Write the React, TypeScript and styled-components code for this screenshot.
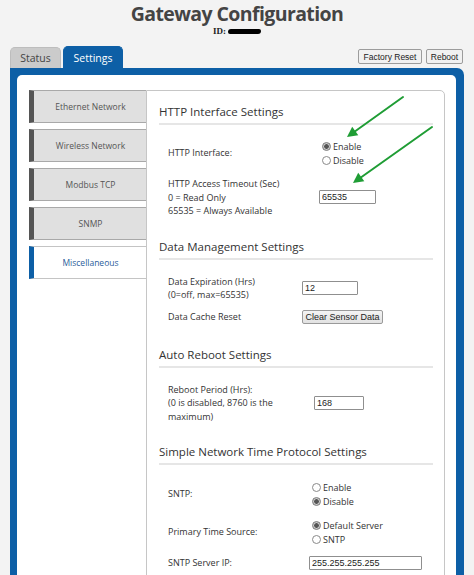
import React from "react";
import styled, { createGlobalStyle } from "styled-components";

const BLUE = "#0d5fa6";

const GlobalStyle = createGlobalStyle`
  html, body {
    margin: 0;
    padding: 0;
    overflow: hidden;
    background: #f3f3f3;
    font-family: "Open Sans", "Noto Sans", sans-serif;
  }
  * { box-sizing: border-box; }
`;

const Page = styled.div`
  position: relative;
  width: 474px;
  height: 575px;
  overflow: hidden;
`;

const Header = styled.header`
  height: 46px;
  display: flex;
  flex-direction: column;
  align-items: center;
`;

const Title = styled.h1`
  margin: 0;
  font-size: 19.5px;
  line-height: normal;
  letter-spacing: -0.6px;
  font-weight: 700;
  color: #444;
  text-align: center;
`;

const IdLine = styled.div`
  height: 9px;
  display: flex;
  justify-content: center;
  align-items: center;
  gap: 2px;
  font-family: "Liberation Serif", serif;
  font-weight: 700;
  font-size: 9px;
  line-height: 9px;
  color: #222;
`;

const Redacted = styled.span`
  display: inline-block;
  width: 33px;
  height: 5px;
  background: #000;
  border-radius: 3px 2px 3px 2px;
`;

const TabsRow = styled.div`
  height: 22px;
  padding: 0 11px 0 10px;
  display: flex;
  align-items: flex-end;
`;

const Tab = styled.div<{ $active?: boolean; $w: number }>`
  width: ${(p) => p.$w}px;
  height: ${(p) => (p.$active ? 22 : 21)}px;
  margin-right: 2px;
  border-radius: 5px 5px 0 0;
  display: flex;
  align-items: center;
  justify-content: center;
  font-size: 10.5px;
  background: ${(p) => (p.$active ? BLUE : "#cbcbcb")};
  color: ${(p) => (p.$active ? "#fff" : "#444")};
  border: 1px solid ${(p) => (p.$active ? BLUE : "#bdbdbd")};
  border-bottom: none;
`;

const TopButtons = styled.div`
  margin-left: auto;
  align-self: flex-start;
  margin-top: 3px;
  display: flex;
  gap: 4px;
`;

const SmallButton = styled.button<{ $w: number }>`
  width: ${(p) => p.$w}px;
  height: 15px;
  padding: 0;
  font-family: "Liberation Sans", Arial, sans-serif;
  font-size: 8.5px;
  color: #222;
  background: #f1f1f1;
  border: 1px solid #9c9c9c;
  border-radius: 2px;
`;

const Panel = styled.div`
  margin: 0 10px;
  background: ${BLUE};
  padding: 7px 8px 0 7px;
  border-radius: 0 7px 0 0;
`;

const Inner = styled.div`
  background: #fff;
  border-radius: 5px 5px 0 0;
  padding: 15px 11px 0 12px;
  height: 520px;
  display: flex;
`;

const Nav = styled.div`
  width: 117px;
  flex: none;
  display: flex;
  flex-direction: column;
  gap: 6px;
`;

const NavItem = styled.div<{ $active?: boolean }>`
  height: 33px;
  display: flex;
  align-items: center;
  justify-content: center;
  font-size: 8.5px;
  color: ${(p) => (p.$active ? "#2b5d9b" : "#555")};
  background: ${(p) => (p.$active ? "#fff" : "#e0e0e0")};
  border-top: 1px solid ${(p) => (p.$active ? "#c4c4c4" : "#a9a9a9")};
  border-bottom: 1px solid ${(p) => (p.$active ? "#c4c4c4" : "#a9a9a9")};
  border-left: 5px solid ${(p) => (p.$active ? BLUE : "#555")};
  padding-left: 1px;
`;

const Content = styled.div`
  flex: 1;
  border: 1px solid #c6c6c6;
  border-radius: 0 5px 0 0;
  padding: 0 11px 0 12px;
`;

const Section = styled.section<{ $top: number }>`
  margin-top: ${(p) => p.$top}px;
`;

const Heading = styled.h2`
  margin: 0;
  font-size: 11.5px;
  line-height: 16px;
  font-weight: 400;
  color: #333;
`;

const Rule = styled.div`
  margin-top: 3px;
  border-top: 2px solid #e6e6e6;
`;

const Rows = styled.div`
  padding-left: 9px;
`;

const Row = styled.div<{ $top: number }>`
  display: flex;
  align-items: center;
  margin-top: ${(p) => p.$top}px;
`;

const Label = styled.div<{ $w: number }>`
  width: ${(p) => p.$w}px;
  flex: none;
  font-size: 9px;
  line-height: 13.5px;
  color: #333;
  white-space: nowrap;
`;

const RadioGroup = styled.div`
  display: flex;
  flex-direction: column;
`;

const RadioOption = styled.label`
  height: 14px;
  display: flex;
  align-items: center;
  font-size: 9px;
  color: #333;
`;

const RadioDot = styled.span<{ $checked?: boolean }>`
  width: 9px;
  height: 9px;
  margin: 0 2px 0 3px;
  border-radius: 50%;
  border: 1px solid ${(p) => (p.$checked ? "#7a7a7a" : "#8a8a8a")};
  background: ${(p) =>
    p.$checked
      ? "radial-gradient(circle, #555 0 2px, #c9c9c9 2.6px)"
      : "#fff"};
`;

const TextInput = styled.input<{ $w: number }>`
  width: ${(p) => p.$w}px;
  height: 14px;
  padding: 0 2px;
  font-family: "Liberation Sans", Arial, sans-serif;
  font-size: 9px;
  color: #222;
  border: 1px solid #8f8f8f;
  border-radius: 1px;
  background: #fff;
  outline: none;
`;

const ActionButton = styled.button`
  width: 81px;
  height: 14px;
  padding: 0;
  font-family: "Liberation Sans", Arial, sans-serif;
  font-size: 9px;
  color: #222;
  background: linear-gradient(#f4f4f4, #e2e2e2);
  border: 1px solid #9a9a9a;
  border-radius: 2px;
`;

const Overlay = styled.svg`
  position: absolute;
  left: 0;
  top: 0;
  pointer-events: none;
`;

function Radio({ label, checked }: { label: string; checked?: boolean }) {
  return (
    <RadioOption>
      <RadioDot $checked={checked} />
      {label}
    </RadioOption>
  );
}

export default function App() {
  return (
    <Page>
      <GlobalStyle />
      <Header>
        <Title>Gateway Configuration</Title>
        <IdLine>
          ID: <Redacted />
        </IdLine>
      </Header>
      <TabsRow>
        <Tab $w={51}>Status</Tab>
        <Tab $w={60} $active>
          Settings
        </Tab>
        <TopButtons>
          <SmallButton $w={64}>Factory Reset</SmallButton>
          <SmallButton $w={37}>Reboot</SmallButton>
        </TopButtons>
      </TabsRow>
      <Panel>
        <Inner>
          <Nav>
            <NavItem>Ethernet Network</NavItem>
            <NavItem>Wireless Network</NavItem>
            <NavItem>Modbus TCP</NavItem>
            <NavItem>SNMP</NavItem>
            <NavItem $active>Miscellaneous</NavItem>
          </Nav>
          <Content>
            <Section $top={13}>
              <Heading>HTTP Interface Settings</Heading>
              <Rule />
              <Rows>
                <Row $top={14}>
                  <Label $w={151}>HTTP Interface:</Label>
                  <RadioGroup>
                    <Radio label="Enable" checked />
                    <Radio label="Disable" />
                  </RadioGroup>
                </Row>
                <Row $top={10}>
                  <Label $w={151}>
                    HTTP Access Timeout (Sec)
                    <br />0 = Read Only
                    <br />
                    65535 = Always Available
                  </Label>
                  <TextInput $w={57} defaultValue="65535" />
                </Row>
              </Rows>
            </Section>
            <Section $top={21}>
              <Heading>Data Management Settings</Heading>
              <Rule />
              <Rows>
                <Row $top={15}>
                  <Label $w={134}>
                    Data Expiration (Hrs)
                    <br />
                    (0=off, max=65535)
                  </Label>
                  <TextInput $w={56} defaultValue="12" />
                </Row>
                <Row $top={8}>
                  <Label $w={134}>Data Cache Reset</Label>
                  <ActionButton>Clear Sensor Data</ActionButton>
                </Row>
              </Rows>
            </Section>
            <Section $top={23}>
              <Heading>Auto Reboot Settings</Heading>
              <Rule />
              <Rows>
                <Row $top={15}>
                  <Label $w={146}>
                    Reboot Period (Hrs):
                    <br />
                    (0 is disabled, 8760 is the
                    <br />
                    maximum)
                  </Label>
                  <TextInput $w={50} defaultValue="168" />
                </Row>
              </Rows>
            </Section>
            <Section $top={21}>
              <Heading>Simple Network Time Protocol Settings</Heading>
              <Rule />
              <Rows>
                <Row $top={15}>
                  <Label $w={141}>SNTP:</Label>
                  <RadioGroup>
                    <Radio label="Enable" />
                    <Radio label="Disable" checked />
                  </RadioGroup>
                </Row>
                <Row $top={10}>
                  <Label $w={141}>Primary Time Source:</Label>
                  <RadioGroup>
                    <Radio label="Default Server" checked />
                    <Radio label="SNTP" />
                  </RadioGroup>
                </Row>
                <Row $top={10}>
                  <Label $w={141}>SNTP Server IP:</Label>
                  <TextInput $w={113} defaultValue="255.255.255.255" />
                </Row>
              </Rows>
            </Section>
          </Content>
        </Inner>
      </Panel>
      <Overlay width="474" height="575" viewBox="0 0 474 575">
        <g stroke="#1f9d35" strokeWidth="2" strokeLinecap="round">
          <line x1="403" y1="97" x2="352" y2="133.5" />
          <line x1="432" y1="127" x2="358" y2="179.5" />
        </g>
        <g fill="#1f9d35">
          <polygon points="347,137 358.3,135.2 352.2,126.8" />
          <polygon points="353,183 364.3,181.2 358.2,172.8" />
        </g>
      </Overlay>
    </Page>
  );
}
